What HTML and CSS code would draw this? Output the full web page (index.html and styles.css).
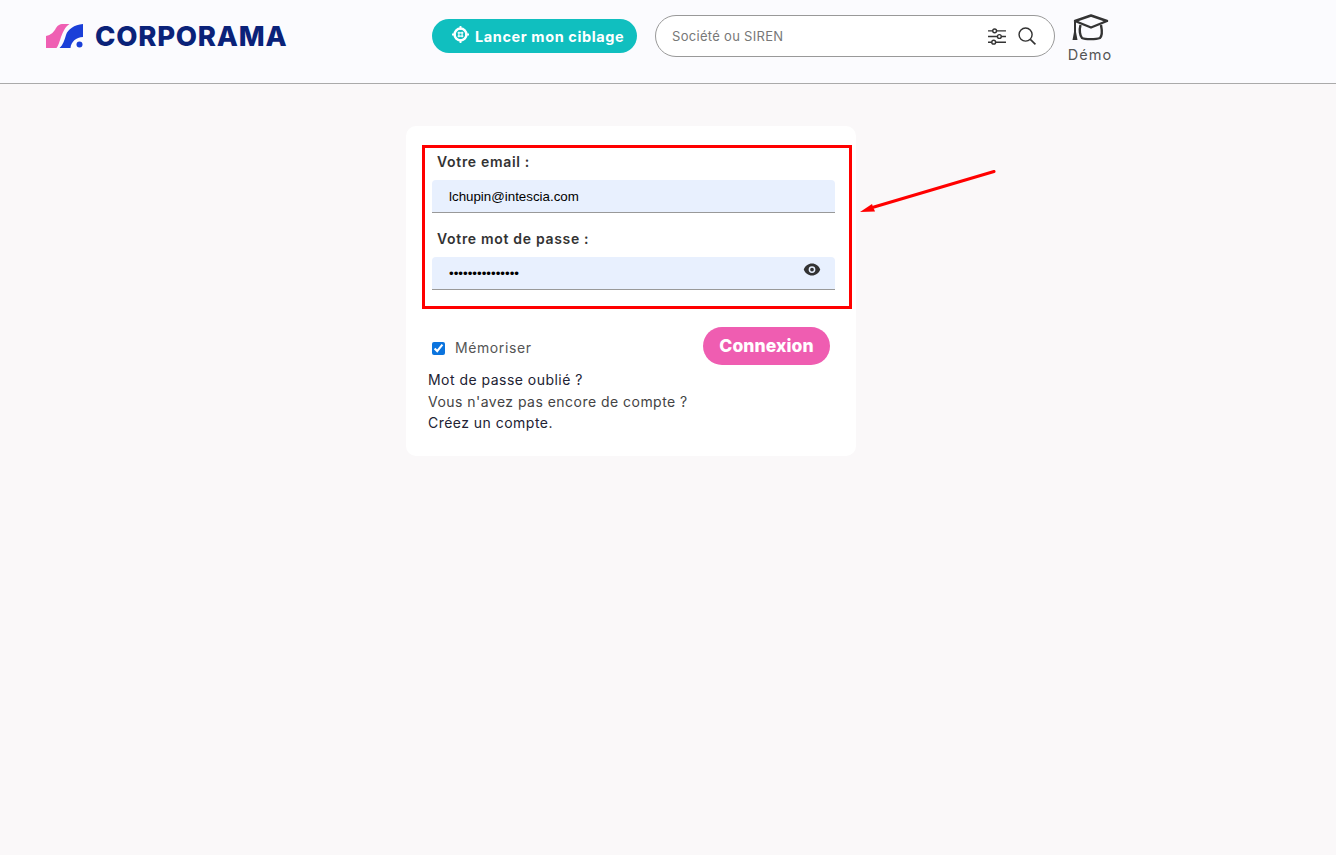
FILE: index.html
```html
<!DOCTYPE html>
<html lang="fr">
<head>
<meta charset="utf-8">
<title>Corporama</title>
<link rel="stylesheet" href="styles.css">
</head>
<body>
<header class="topbar">
  <a class="logo" href="#">
    <svg class="logo-mark" viewBox="0 0 38 25" aria-hidden="true">
      <path fill="#ef5fb3" d="M1 25V13C6 12 9 9 11 5 13 2 15 1 17 1H24.500C20 4 18 9 16 14 14.500 19 13 23 11.500 25Z"/>
      <path fill="#1a3fd8" d="M14.500 25C18 22 19.500 17 21 12 23 6 29 2 38 1V14C31 14 26 19 25.500 25Z"/>
      <circle fill="#1a3fd8" cx="34.500" cy="21.500" r="3"/>
    </svg>
    <span class="logo-text">CORPORAMA</span>
  </a>
  <a class="cta" href="#">
    <svg class="cta-icon" viewBox="0 0 18 18" aria-hidden="true">
      <circle cx="9" cy="9" r="6.300" fill="none" stroke="#fff" stroke-width="2.600"/>
      <path fill="none" stroke="#fff" stroke-width="2" d="M9 0V4M9 14V18M0 9H4M14 9H18"/>
      <path fill="none" stroke="#fff" stroke-width="1.200" d="M7.300 6V12M10.700 6V12M6 7.300H12M6 10.700H12"/>
    </svg>
    <span>Lancer mon ciblage</span>
  </a>
  <div class="search">
    <span class="search-text">Société ou SIREN</span>
    <svg class="sliders" viewBox="0 0 19 18" aria-hidden="true">
      <g fill="none" stroke="#333" stroke-width="1.500">
        <path d="M0 3H5M9 3H19M0 9H10M14 9H19M0 15H4M8 15H19"/>
        <circle cx="7" cy="3" r="2"/><circle cx="12" cy="9" r="2"/><circle cx="6" cy="15" r="2"/>
      </g>
    </svg>
    <svg class="magnifier" viewBox="0 0 19 19" aria-hidden="true">
      <circle cx="8" cy="8" r="6.900" fill="none" stroke="#333" stroke-width="1.500"/>
      <path d="M13 13L18.400 18.400" fill="none" stroke="#333" stroke-width="1.700"/>
    </svg>
  </div>
  <a class="demo" href="#">
    <svg class="demo-icon" viewBox="0 0 38 27" aria-hidden="true">
      <path fill="none" stroke="#333" stroke-width="2.400" stroke-linejoin="round" d="M20 1.500L36 7 20 13.500 4 7Z"/>
      <path fill="none" stroke="#333" stroke-width="2.400" d="M9.500 11C8 16 9 22 11 24 14 25.500 25 25.500 29 24 31 22 31 16 30 11"/>
      <path fill="#333" d="M3 7.500H5V18L6.500 26H1.500L3 18Z"/>
    </svg>
    <span>Démo</span>
  </a>
</header>

<main class="page">
  <form class="card">
    <div class="highlight">
      <label class="field-label" for="email">Votre email :</label>
      <div class="field"><input id="email" type="text" value="lchupin@intescia.com"></div>
      <label class="field-label second" for="password">Votre mot de passe :</label>
      <div class="field">
        <input id="password" type="password" value="motdepasse12345">
        <svg class="eye" viewBox="0 0 24 24" aria-hidden="true">
          <path fill="#333" fill-rule="evenodd" d="M12 4C7 4 2.730 7.400 1 12c1.730 4.600 6 8 11 8s9.270-3.400 11-8c-1.730-4.600-6-8-11-8zm0 3.500a4.500 4.500 0 1 1 0 9 4.500 4.500 0 0 1 0-9zm0 2a2.500 2.500 0 1 0 0 5 2.500 2.500 0 0 0 0-5z"/>
        </svg>
      </div>
    </div>
    <div class="actions">
      <label class="remember"><input type="checkbox" checked><span>Mémoriser</span></label>
      <button class="submit" type="button">Connexion</button>
    </div>
    <ul class="links">
      <li><a href="#">Mot de passe oublié ?</a></li>
      <li class="muted">Vous n'avez pas encore de compte ?</li>
      <li><a href="#">Créez un compte.</a></li>
    </ul>
  </form>
</main>

<svg class="arrow" viewBox="0 0 140 50" aria-hidden="true">
  <path d="M134 1.500L14 37" fill="none" stroke="#f00" stroke-width="3" stroke-linecap="round"/>
  <path d="M0 42L12 34 15 41.500Z" fill="#f00"/>
</svg>
</body>
</html>
```
FILE: styles.css
```css
* { box-sizing: border-box; }
html, body { margin: 0; height: 100%; }
body {
  position: relative;
  min-height: 855px;
  background: #faf8f9;
  font-family: Inter, "Noto Sans", sans-serif;
  color: #333;
}
a { color: inherit; text-decoration: none; }

.topbar {
  display: flex;
  align-items: flex-start;
  height: 84px;
  padding-left: 45px;
  background: #fbfbfe;
  border-bottom: 1px solid #aaa;
}
.logo {
  display: flex;
  align-items: center;
  width: 387px;
  height: 25px;
  margin-top: 23px;
}
.logo-mark { width: 38px; height: 25px; flex: none; }
.logo-text {
  margin-left: 12px;
  font-size: 27.5px;
  font-weight: 800;
  letter-spacing: 0.75px;
  color: #0a2279;
}
.cta {
  display: flex;
  align-items: center;
  gap: 6px;
  width: 205px;
  height: 34px;
  margin-top: 19px;
  padding-left: 20px;
  border-radius: 17px;
  background: #10bfbf;
  color: #fff;
  font-size: 14.5px;
  font-weight: 700;
  letter-spacing: 0.6px;
}
.cta-icon { width: 17px; height: 17px; margin-top: -3px; flex: none; }
.search {
  display: flex;
  align-items: center;
  width: 400px;
  height: 42px;
  margin: 15px 0 0 18px;
  padding: 0 18px 0 16px;
  background: #fff;
  border: 1px solid #999;
  border-radius: 21px;
}
.search-text { flex: 1; font-size: 13px; letter-spacing: 0.3px; color: #777; }
.sliders { width: 18px; height: 17px; margin-right: 12px; }
.magnifier { width: 18px; height: 18px; }
.demo {
  display: flex;
  flex-direction: column;
  align-items: center;
  width: 44px;
  margin: 14px 0 0 13px;
  font-size: 14.5px;
  letter-spacing: 1px;
  color: #555;
}
.demo-icon { width: 38px; height: 27px; margin-bottom: 5px; }

.page { display: flex; padding: 42px 0 0 406px; }
.card {
  width: 450px;
  height: 330px;
  padding: 19px 4px 0 16px;
  background: #fff;
  border-radius: 10px;
}
.highlight {
  height: 164px;
  padding: 0 14px 0 7px;
  border: 3px solid #f00;
}
.field-label {
  display: block;
  height: 32px;
  padding: 4px 0 0 5px;
  font-size: 14px;
  font-weight: 600;
  letter-spacing: 0.68px;
  line-height: 20px;
}
.field-label.second { height: 44px; padding-top: 16px; }
.field {
  position: relative;
  height: 33px;
  background: #e8f0fe;
  border-bottom: 1px solid #999;
  border-radius: 4px 4px 0 0;
}
.field input {
  display: block;
  width: 100%;
  height: 32px;
  padding: 0 45px 0 17px;
  border: 0;
  outline: 0;
  background: transparent;
  font-family: "Liberation Sans", sans-serif;
  font-size: 13.33px;
  color: #000;
}
.eye { position: absolute; top: 3px; right: 14px; width: 18px; height: 19px; }

.actions {
  display: flex;
  align-items: flex-start;
  justify-content: space-between;
  padding: 18px 22px 0 10px;
}
.remember {
  display: flex;
  align-items: center;
  margin-top: 12px;
  font-size: 14px;
  letter-spacing: 0.6px;
  color: #555;
}
.remember input { width: 13px; height: 13px; margin: 2px 10px 0 0; accent-color: #0b74de; }
.submit {
  width: 127px;
  height: 38px;
  border: 0;
  padding: 0 0 2px;
  border-radius: 19px;
  background: #ef5db1;
  color: #fff;
  font-family: inherit;
  font-size: 17.5px;
  font-weight: 800;
  letter-spacing: 0.1px;
}
.links {
  list-style: none;
  margin: 4px 0 0;
  padding: 0 0 0 6px;
  font-size: 14px;
  letter-spacing: 0.47px;
  line-height: 21.5px;
  color: #223;
}
.links .muted { color: #444; }

.arrow { position: absolute; left: 860px; top: 170px; width: 140px; height: 50px; }
```
